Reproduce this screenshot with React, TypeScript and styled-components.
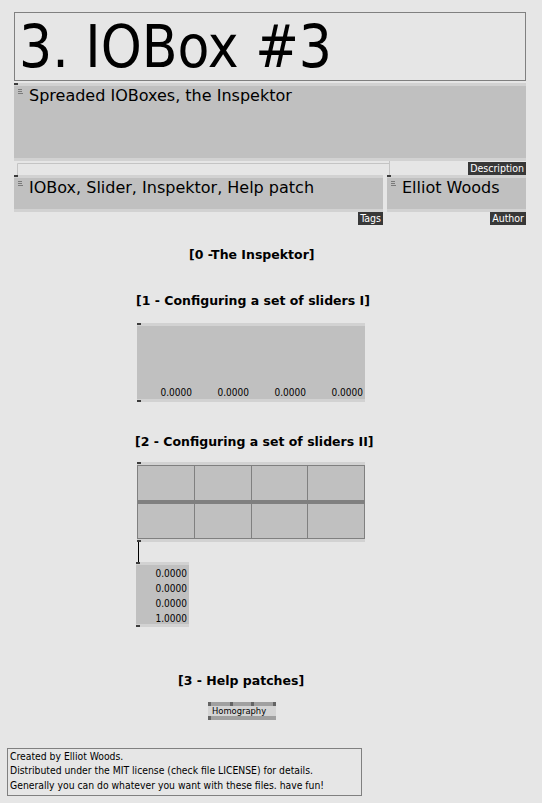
import React from 'react'
import styled, {createGlobalStyle} from 'styled-components'

const GlobalStyle = createGlobalStyle`
  html, body {
    margin:0;
    padding:0;
    background:#e6e6e6;
  }
  body {
    overflow:hidden;
  }
`

// the patch is a free canvas: every node sits at its own place
const Canvas = styled.div`
  position:relative;
  width:542px;
  height:803px;
  background:#e6e6e6;
  color:#000;
  font-family:"DejaVu Sans Condensed","DejaVu Sans",sans-serif;
  font-stretch:semi-condensed;
`

type Pos = {$x:number;$y:number;$w?:number;$h?:number}

const Node = styled.div<Pos>`
  position:absolute;
  left:${p=>p.$x}px;
  top:${p=>p.$y}px;
  ${p=>p.$w!==undefined?`width:${p.$w}px;`:''}
  ${p=>p.$h!==undefined?`height:${p.$h}px;`:''}
  box-sizing:border-box;
`

const TitleBox = styled(Node)`
  border:1px solid #808080;
  font-size:58px;
  line-height:64px;
  padding:2px 0 0 4px;
  white-space:nowrap;
  overflow:hidden;
`

const IOBox = styled(Node)`
  display:flex;
  flex-direction:column;
`

const Strip = styled.div<{$bottom?:boolean}>`
  flex:none;
  height:3px;
  background:#d2d2d2;
  display:flex;
  align-items:${p=>p.$bottom?'flex-end':'flex-start'};
`

const Pin = styled.span`
  width:4px;
  height:2px;
  background:#3c3c3c;
`

const StringBody = styled.div`
  flex:1;
  min-height:0;
  background:#c0c0c0;
  display:flex;
  align-items:flex-start;
  gap:6px;
  padding:0 0 0 4px;
  font-family:"DejaVu Sans",sans-serif;
  font-stretch:normal;
  font-size:16px;
  line-height:20px;
  white-space:nowrap;
  overflow:hidden;
`

const Grip = styled.svg`
  flex:none;
  margin-top:3px;
`

const PinLabel = styled.span<{$gap:number}>`
  position:absolute;
  right:0;
  top:calc(100% + ${p=>p.$gap}px);
  background:#383838;
  color:#fff;
  font-size:10.5px;
  line-height:13px;
  padding:0 2px;
  white-space:nowrap;
`

const Wires = styled.svg`
  position:absolute;
  left:0;
  top:0;
  pointer-events:none;
`

const Comment = styled(Node)`
  font-family:"DejaVu Sans",sans-serif;
  font-stretch:normal;
  font-weight:bold;
  font-size:12.5px;
  line-height:15px;
  white-space:nowrap;
`

const SliderRow = styled.div`
  flex:1;
  background:#c0c0c0;
  display:grid;
  grid-template-columns:repeat(4,1fr);
  align-items:end;
`

const SliderValue = styled.div`
  text-align:right;
  padding-right:2px;
  font-size:10px;
  line-height:12px;
`

const SliderGrid = styled.div`
  flex:1;
  display:grid;
  grid-template-columns:repeat(4,1fr);
  grid-template-rows:1fr 1fr;
  column-gap:1px;
  row-gap:4px;
  background:#808080;
  border:1px solid #808080;
`

const Cell = styled.div`
  background:#c0c0c0;
`

const ValueList = styled.div`
  flex:1;
  min-height:0;
  background:#c0c0c0;
  display:flex;
  flex-direction:column;
  align-items:flex-end;
  padding:1px 2px 0 0;
  font-size:10px;
  line-height:15px;
`

const PatchNode = styled(Node)`
  display:flex;
  flex-direction:column;
`

const PatchStrip = styled.div<{$spread?:boolean}>`
  flex:none;
  height:4px;
  background:#a0a0a0;
  display:flex;
  justify-content:${p=>p.$spread?'space-between':'flex-start'};
`

const PatchPin = styled.span`
  width:3px;
  background:#646464;
`

const PatchBody = styled.div`
  flex:1;
  background:#d4d4d4;
  font-size:9.3px;
  line-height:10px;
  padding-left:4px;
  white-space:nowrap;
`

const Note = styled(Node)`
  border:1px solid #808080;
  padding:0 0 0 2px;
  font-size:10.3px;
  line-height:14.4px;
  white-space:nowrap;
`

const GripIcon = () => (
  <Grip width="5" height="6" viewBox="0 0 5 6">
    <path d="M0 0.5H4M0 2.5H4M0 4.5H5" stroke="#7a7a7a" strokeWidth="1" />
  </Grip>
)

type StringBoxProps = {x:number,y:number,w:number,h:number,text:string,label:string,gap:number}

function StringBox({x,y,w,h,text,label,gap}:StringBoxProps) {
  return (
    <IOBox $x={x} $y={y} $w={w} $h={h}>
      <Strip><Pin/></Strip>
      <StringBody>
        <GripIcon/>
        <span>{text}</span>
      </StringBody>
      <Strip $bottom/>
      <PinLabel $gap={gap}>{label}</PinLabel>
    </IOBox>
  )
}

const sliderValues = ['0.0000','0.0000','0.0000','0.0000']
const vectorValues = ['0.0000','0.0000','0.0000','1.0000']

function App() {
  return (
    <Canvas>
      <GlobalStyle/>
      <Wires width="542" height="803" viewBox="0 0 542 803">
        <path d="M17.5 175V163.5H389.5M389.5 159V175" fill="none" stroke="#c4c4c4" strokeWidth="1" />
        <path d="M138.5 541V563" stroke="#000" strokeWidth="1" />
      </Wires>

      <TitleBox $x={14} $y={12} $w={512} $h={69}>3. IOBox #3</TitleBox>

      <StringBox x={14} y={83} w={512} h={78} text="Spreaded IOBoxes, the Inspektor" label="Description" gap={1}/>
      <StringBox x={14} y={175} w={369} h={37} text="IOBox, Slider, Inspektor, Help patch" label="Tags" gap={0}/>
      <StringBox x={387} y={175} w={139} h={37} text="Elliot Woods" label="Author" gap={0}/>

      <Comment $x={189} $y={247}>[0 -The Inspektor]</Comment>
      <Comment $x={136} $y={293}>[1 - Configuring a set of sliders I]</Comment>

      <IOBox $x={137} $y={323} $w={228} $h={79}>
        <Strip><Pin/></Strip>
        <SliderRow>
          {sliderValues.map((v,i)=><SliderValue key={i}>{v}</SliderValue>)}
        </SliderRow>
        <Strip $bottom><Pin/></Strip>
      </IOBox>

      <Comment $x={135} $y={434}>[2 - Configuring a set of sliders II]</Comment>

      <IOBox $x={137} $y={462} $w={228} $h={80}>
        <Strip><Pin/></Strip>
        <SliderGrid>
          {Array.from({length:8}).map((_,i)=><Cell key={i}/>)}
        </SliderGrid>
        <Strip $bottom><Pin/></Strip>
      </IOBox>

      <IOBox $x={136} $y={562} $w={53} $h={65}>
        <Strip><Pin/></Strip>
        <ValueList>
          {vectorValues.map((v,i)=><div key={i}>{v}</div>)}
        </ValueList>
        <Strip $bottom><Pin/></Strip>
      </IOBox>

      <Comment $x={178} $y={673}>[3 - Help patches]</Comment>

      <PatchNode $x={208} $y={702} $w={68} $h={18}>
        <PatchStrip $spread>
          <PatchPin/><PatchPin/><PatchPin/><PatchPin/>
        </PatchStrip>
        <PatchBody>Homography</PatchBody>
        <PatchStrip><PatchPin/></PatchStrip>
      </PatchNode>

      <Note $x={7} $y={748} $w={355} $h={48}>
        <div>Created by Elliot Woods.</div>
        <div>Distributed under the MIT license (check file LICENSE) for details.</div>
        <div>Generally you can do whatever you want with these files. have fun!</div>
      </Note>
    </Canvas>
  )
}

export default App
